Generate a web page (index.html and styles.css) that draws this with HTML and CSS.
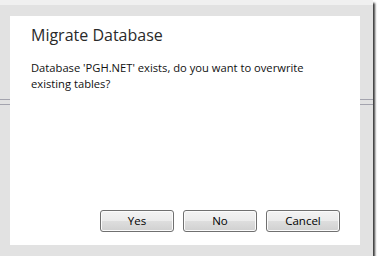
FILE: index.html
```html
<!DOCTYPE html>
<html>
<head>
<meta charset="utf-8">
<link rel="stylesheet" href="styles.css">
</head>
<body>
<div class="window">
  <div class="panel">
    <div class="title">Migrate Database</div>
    <div class="message">Database 'PGH.NET' exists, do you want to overwrite existing tables?</div>
    <div class="buttons">
      <button class="btn">Yes</button>
      <button class="btn">No</button>
      <button class="btn">Cancel</button>
    </div>
  </div>
</div>
</body>
</html>
```
FILE: styles.css
```css
html, body {
  margin: 0;
  background: #ffffff;
}
.window {
  width: 373px;
  height: 256px;
  box-sizing: border-box;
  padding: 16px 13px 11px 10px;
  background:
    linear-gradient(#f0f0f0 0, #f0f0f0 5px, transparent 5px),
    linear-gradient(transparent 99px, #a4a4ae 99px, #a4a4ae 100px, transparent 100px, transparent 104px, #a4a4ae 104px, #a4a4ae 105px, transparent 105px),
    #e2e2e2;
  box-shadow: 2px 3px 2px #3a3a3a;
  font-family: "Segoe UI", "Open Sans", "Noto Sans", sans-serif;
}
.panel {
  width: 350px;
  height: 229px;
  box-sizing: border-box;
  background: #ffffff;
  padding: 9px 20px 13px 21px;
  display: flex;
  flex-direction: column;
}
.title {
  font-size: 16px;
  line-height: 21px;
  color: #2a2a2a;
}
.message {
  margin-top: 14px;
  font-size: 11.2px;
  line-height: 16px;
  color: #111;
  width: 290px;
}
.buttons {
  margin-top: auto;
  display: flex;
  justify-content: flex-end;
  gap: 9px;
}
.btn {
  width: 74px;
  height: 22px;
  box-sizing: border-box;
  border: 1px solid #707070;
  border-radius: 3px;
  background: linear-gradient(#f3f3f3 0%, #ebebeb 50%, #dedede 50%, #d0d0d0 100%);
  box-shadow: inset 0 0 0 1px #fbfbfb;
  font-family: "Segoe UI", "Open Sans", "Noto Sans", sans-serif;
  font-size: 11.5px;
  color: #000;
  padding: 0;
  line-height: 18px;
}
```
